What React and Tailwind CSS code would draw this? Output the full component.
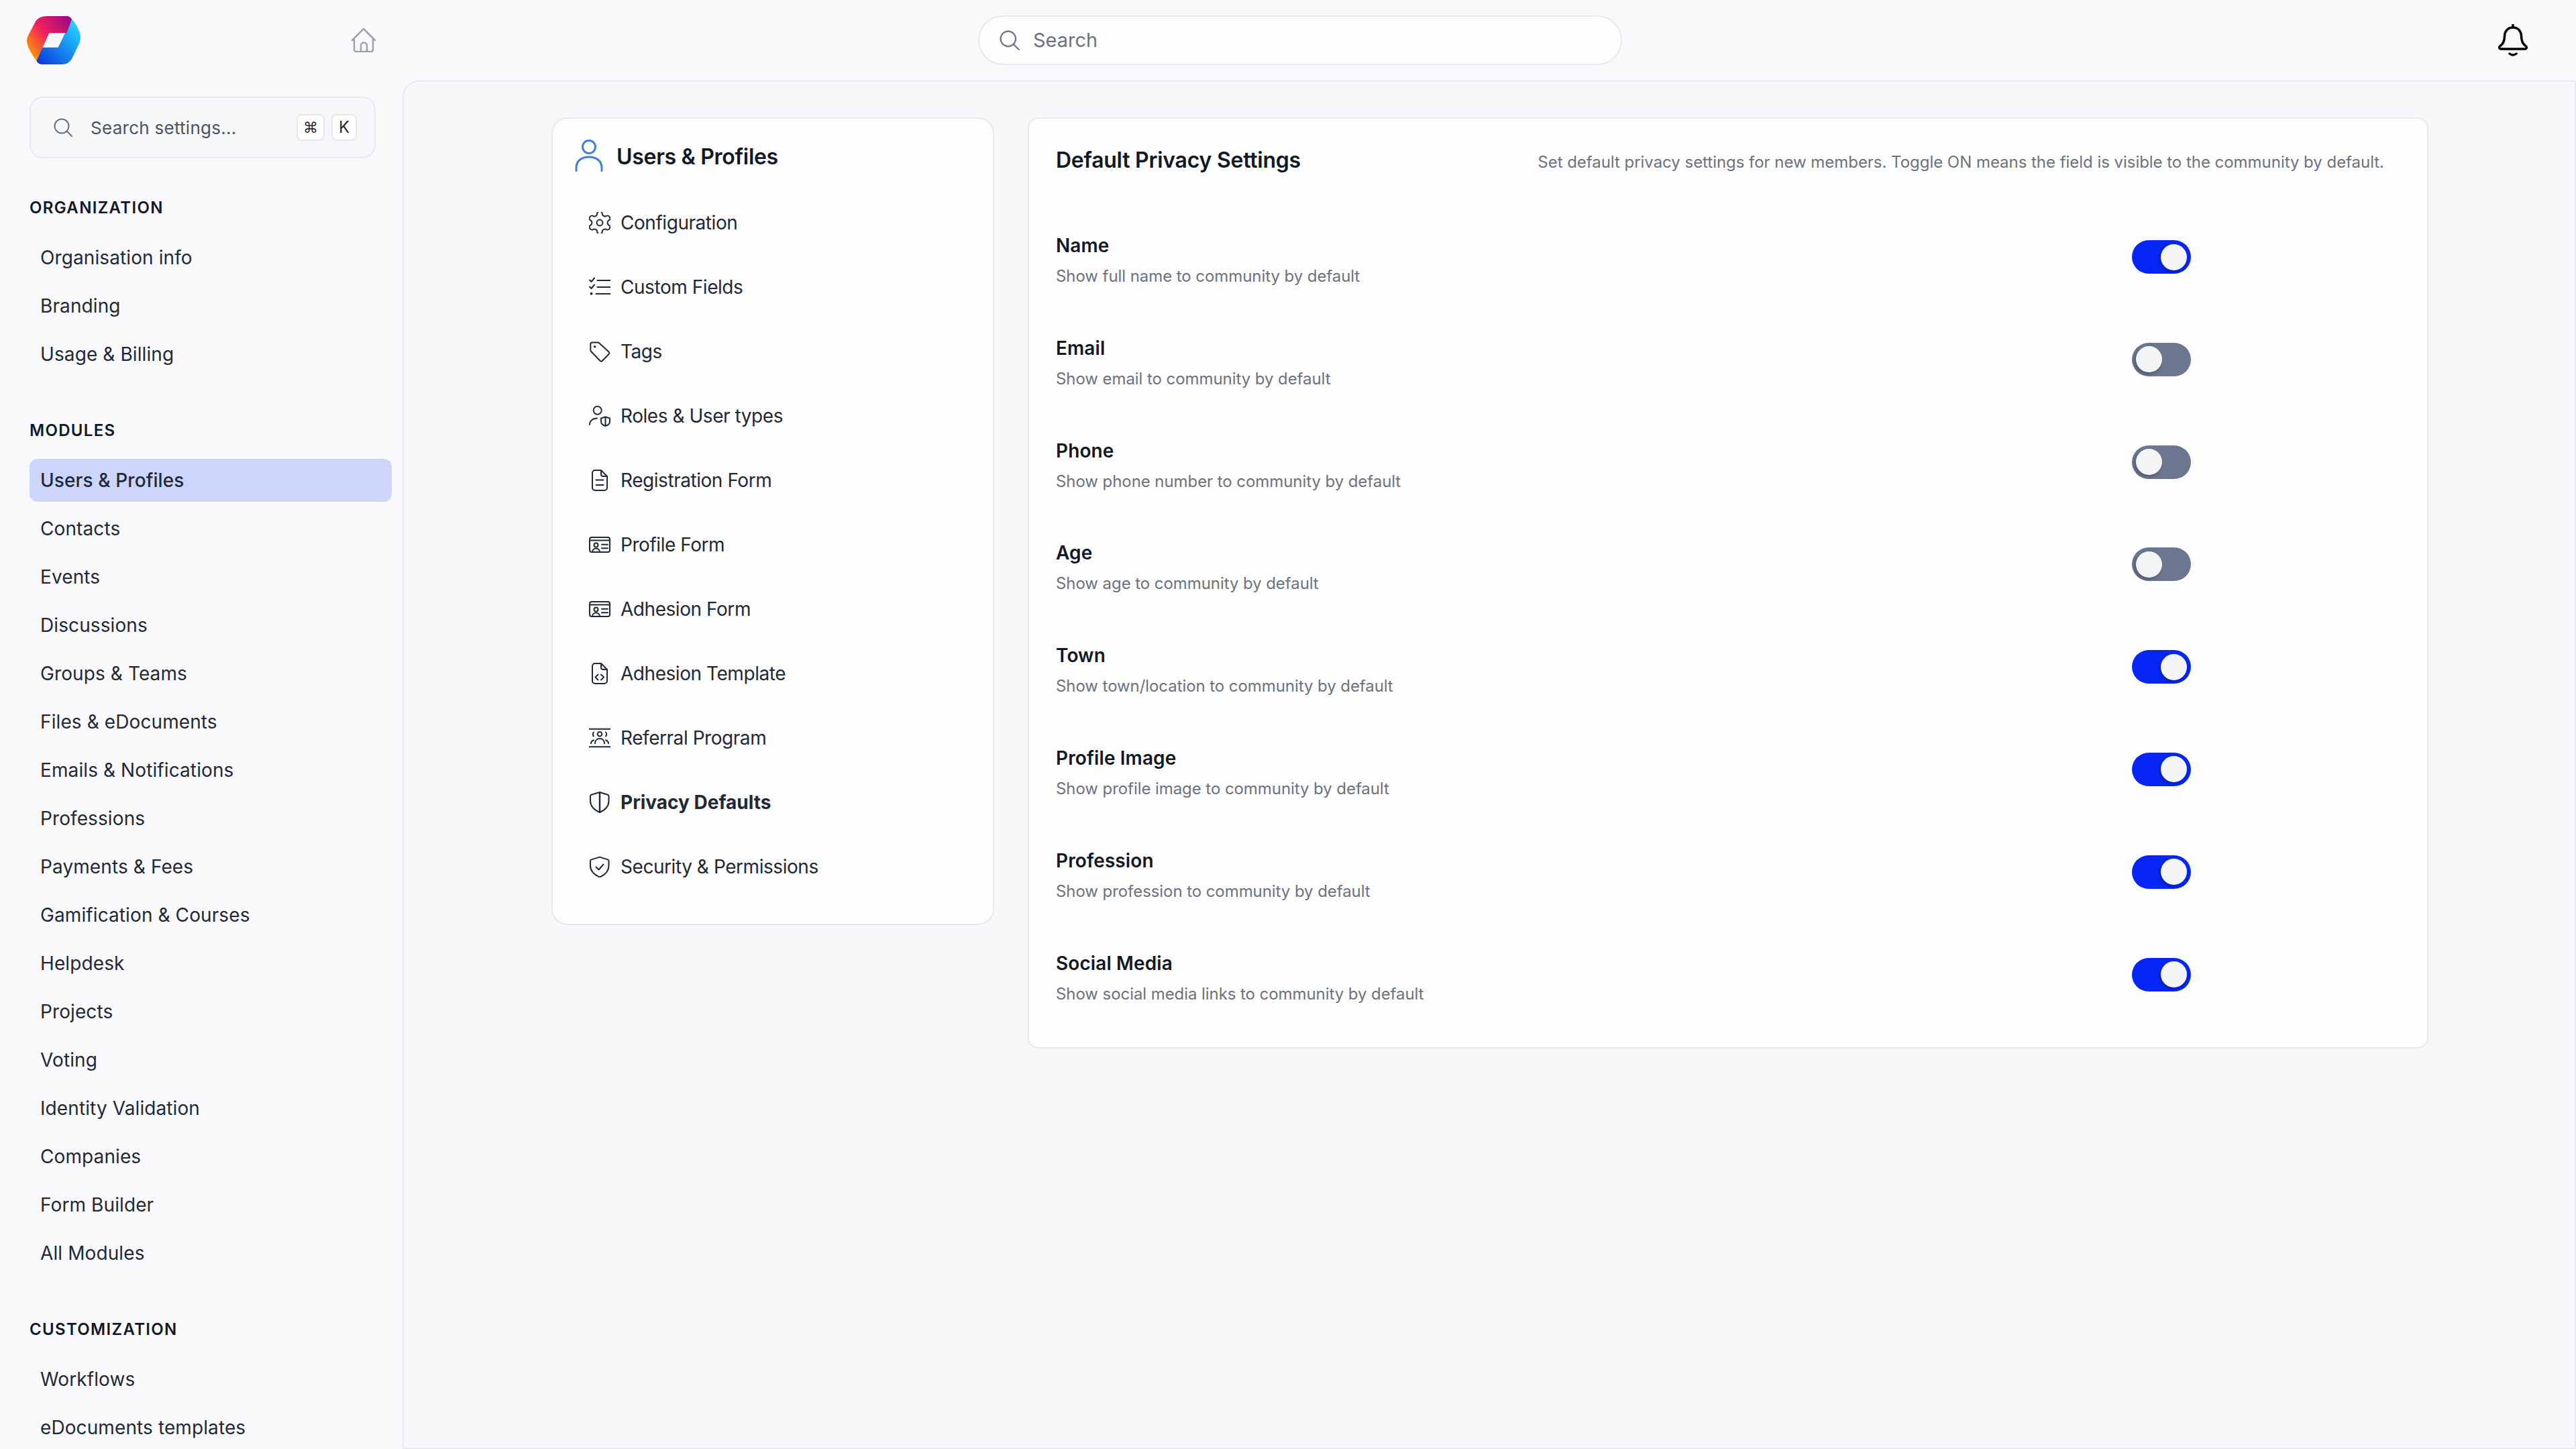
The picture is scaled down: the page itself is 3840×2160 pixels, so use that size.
import React from "react";

const Svg = ({ children, className = "w-8 h-8 shrink-0", vb = "0 0 32 32", sw = 2 }) => (
  <svg viewBox={vb} fill="none" stroke="currentColor" strokeWidth={sw} strokeLinecap="round" strokeLinejoin="round" className={className}>
    {children}
  </svg>
);

const Gear = () => (
  <Svg>
    <g transform="translate(-4.4 -4.4) scale(1.7)" strokeWidth="1.18">
      <path d="M12.22 2h-.44a2 2 0 0 0-2 2v.18a2 2 0 0 1-1 1.73l-.43.25a2 2 0 0 1-2 0l-.15-.08a2 2 0 0 0-2.73.73l-.22.38a2 2 0 0 0 .73 2.73l.15.1a2 2 0 0 1 1 1.72v.51a2 2 0 0 1-1 1.74l-.15.09a2 2 0 0 0-.73 2.73l.22.38a2 2 0 0 0 2.73.73l.15-.08a2 2 0 0 1 2 0l.43.25a2 2 0 0 1 1 1.73V20a2 2 0 0 0 2 2h.44a2 2 0 0 0 2-2v-.18a2 2 0 0 1 1-1.73l.43-.25a2 2 0 0 1 2 0l.15.08a2 2 0 0 0 2.73-.73l.22-.39a2 2 0 0 0-.73-2.73l-.15-.08a2 2 0 0 1-1-1.74v-.5a2 2 0 0 1 1-1.74l.15-.09a2 2 0 0 0 .73-2.73l-.22-.38a2 2 0 0 0-2.73-.73l-.15.08a2 2 0 0 1-2 0l-.43-.25a2 2 0 0 1-1-1.73V4a2 2 0 0 0-2-2z" />
      <circle cx="12" cy="12" r="2.6" />
    </g>
  </Svg>
);
const ListCheck = () => (
  <Svg>
    <path d="M12.5 6H32M12.5 16H32M10.5 26H32M1 5.5 3.5 8 8 2.5M1 15.5 3.5 18 8 12.5" />
    <circle cx="3.5" cy="25.7" r="1" />
  </Svg>
);
const Tag = () => (
  <Svg>
    <path d="M4.8 2.5h8.4a3 3 0 0 1 2.1.9l14.2 13.1a2.5 2.5 0 0 1 0 3.5L20 29.8a2.5 2.5 0 0 1-3.5 0L3.2 16a3 3 0 0 1-.9-2V5a2.5 2.5 0 0 1 2.5-2.5z" />
    <circle cx="8.7" cy="8.7" r="0.8" />
  </Svg>
);
const UserShield = () => (
  <Svg>
    <circle cx="12.7" cy="7.7" r="6" />
    <path d="M1 29c0-5 4-9.5 11-9.5M24.5 17.5l6.5 2v5c0 3.5-3 5.5-6.5 6.5-3.5-1-6.5-3-6.5-6.5v-5zM24.5 17.5V31" />
  </Svg>
);
const DocBody = "M9 1h9l9 9v17a4 4 0 0 1-4 4H9a4 4 0 0 1-4-4V5a4 4 0 0 1 4-4zM18 1v6a3 3 0 0 0 3 3h6";
const Doc = () => (
  <Svg>
    <path d={DocBody} />
    <path d="M10.5 15.5h11M10.5 23h11" />
  </Svg>
);
const DocCode = () => (
  <Svg>
    <path d={DocBody} />
    <path d="M13.5 17.5l-4 4 4 4M18 17.5l4 4-4 4" />
  </Svg>
);
const IdCard = () => (
  <Svg>
    <rect x="1" y="5" width="30" height="22" rx="3" />
    <path d="M1 9.5h30M19 15.7h9M19 21.3h9M5 27c0-3.5 2.5-5.5 5.5-5.5s5.5 2 5.5 5.5" />
    <circle cx="10.5" cy="16.5" r="3" />
  </Svg>
);
const Referral = () => (
  <Svg>
    <path d="M0.5 2.7h31M0.5 29.3h31" />
    <circle cx="16" cy="10.3" r="3.3" />
    <path d="M9 24.3c0-4.5 3-7.3 7-7.3s7 2.8 7 7.3M7 7.5c-1.5 1-1.5 5 0 6M25 7.5c1.5 1 1.5 5 0 6M3 24.3c0-2 1.500-4 4-5M29 24.3c0-2-1.500-4-4-5" />
  </Svg>
);
const ShieldPath = "M16 1l12 3.8a2 2 0 0 1 1.500 1.900V14c0 8-5.500 13.500-13.500 17C8 27.500 2 22 2 14V6.700a2 2 0 0 1 1.500-1.900z";
const ShieldHalf = () => (
  <Svg>
    <path d={ShieldPath} />
    <path d="M16 1v30" strokeWidth="2.4" />
  </Svg>
);
const ShieldCheck = () => (
  <Svg>
    <path d={ShieldPath} transform="translate(0 0.6)" />
    <path d="M10.500 16.500l4 4 7-8" />
  </Svg>
);

const Magnifier = ({ className }) => (
  <Svg vb="0 0 28 28" className={className}>
    <circle cx="12" cy="12" r="10.5" />
    <path d="M19.500 19.500 27 27" />
  </Svg>
);

const Logo = () => (
  <svg viewBox="0 0 80 72" className="w-20 h-[72px] shrink-0">
    <defs>
      <linearGradient id="red" x1="0.05" y1="0.85" x2="1" y2="0.1">
        <stop offset="0" stopColor="#ff9a00" />
        <stop offset="0.45" stopColor="#f2215c" />
        <stop offset="1" stopColor="#9c0a82" />
      </linearGradient>
      <linearGradient id="blue" x1="0.1" y1="1" x2="0.9" y2="0.2">
        <stop offset="0" stopColor="#0a3bdc" />
        <stop offset="1" stopColor="#24ccff" />
      </linearGradient>
    </defs>
    <path fill="url(#blue)" d="M67 4.500C72 10 80 22 80 32c0 4-1 7-3 11l-9 19c-3 6-8 10-16 10H24c-5 0-8.500-2-9.500-5.500l6.200-19.800h26z" />
    <path fill="url(#red)" d="M30 0h29c4 0 6.500 2 8 4.500l-7.500 20.800H33.300L14.500 66.500C10 61 0 46 0 37c0-4 1-6 3-10l10-19c3-5 9-8 17-8z" />
  </svg>
);

const Home = () => (
  <Svg vb="0 0 36 36" sw={2.5} className="w-9 h-9 shrink-0 text-[#9ca3af]">
    <path d="M1 18 18 1l17 17M4 15v17a3 3 0 0 0 3 3h22a3 3 0 0 0 3-3V15M14 35v-9a4.500 4.500 0 0 1 9 0v9" />
  </Svg>
);

const Bell = () => (
  <Svg vb="0 0 44 48" sw={3.5} className="w-11 h-12 shrink-0 text-black">
    <path d="M22 1v4M22 5c-8 0-12.500 6-12.500 13 0 8-2.500 12-7 15-1.500 1-1 4 1.500 4h36c2.500 0 3-3 1.500-4-4.500-3-7-7-7-15 0-7-4.500-13-12.500-13zM17 44q5 4 10 0" />
  </Svg>
);

const Section = ({ title, items, active, className = "mt-[66px]" }) => (
  <div className={className}>
    <div className="h-8 leading-8 text-[24px] font-semibold tracking-[0.055em] text-[#111827]">{title}</div>
    <div className="mt-[26px] flex flex-col gap-2">
      {items.map((t) => (
        <div
          key={t}
          className={`w-[540px] h-16 shrink-0 flex items-center pl-4 rounded-xl text-[28px] tracking-[0.1px] text-[#1f2937] ${t === active ? "bg-[#ccd6fd] font-medium" : ""}`}
        >
          {t}
        </div>
      ))}
    </div>
  </div>
);

const subNav = [
  ["Configuration", Gear],
  ["Custom Fields", ListCheck],
  ["Tags", Tag],
  ["Roles & User types", UserShield],
  ["Registration Form", Doc],
  ["Profile Form", IdCard],
  ["Adhesion Form", IdCard],
  ["Adhesion Template", DocCode],
  ["Referral Program", Referral],
  ["Privacy Defaults", ShieldHalf],
  ["Security & Permissions", ShieldCheck],
];

const fields = [
  ["Name", "Show full name to community by default", true],
  ["Email", "Show email to community by default", false],
  ["Phone", "Show phone number to community by default", false],
  ["Age", "Show age to community by default", false],
  ["Town", "Show town/location to community by default", true],
  ["Profile Image", "Show profile image to community by default", true],
  ["Profession", "Show profession to community by default", true],
  ["Social Media", "Show social media links to community by default", true],
];

const Toggle = ({ on }) => (
  <div className={`w-[88px] h-[50px] mt-3 shrink-0 rounded-full flex items-center px-[6px] ${on ? "justify-end bg-[#0526f5]" : "justify-start bg-[#6b7690]"}`}>
    <div className="w-[39px] h-[39px] rounded-full bg-[#f3f4f6] shadow-[-2px_3px_5px_rgba(0,0,0,0.25)]" />
  </div>
);

export default function App() {
  return (
    <div className="w-[3840px] h-[2160px] overflow-hidden flex flex-col bg-[#f9f9fb] font-['Inter',sans-serif]">
      <header className="h-[120px] shrink-0 flex items-center pl-10 pr-[72px]">
        <Logo />
        <div className="ml-[404px]">
          <Home />
        </div>
        <div className="ml-[898px] w-[960px] h-[74px] rounded-[37px] border-2 border-[#e8e9ed] bg-[#fdfdfd] flex items-center pl-[30px] gap-[20px]">
          <Magnifier className="w-[30px] h-[30px] shrink-0 text-[#6b7280]" />
          <span className="text-[29px] text-[#6b7280]">Search</span>
        </div>
        <div className="ml-auto">
          <Bell />
        </div>
      </header>
      <div className="flex-1 min-h-0 flex">
        <aside className="w-[600px] shrink-0 overflow-hidden pl-[44px] pt-6">
          <div className="w-[516px] h-[92px] rounded-[20px] border-2 border-[#e8e9ed] bg-[#f6f7f9] flex items-center pl-[34px] pr-[26px]">
            <Magnifier className="w-7 h-7 shrink-0 text-[#6b7280]" />
            <span className="ml-[27px] text-[26px] tracking-[0.27px] text-[#4b5563]">Search settings...</span>
            <span className="ml-auto w-[42px] h-10 rounded-lg border-2 border-[#e5e7eb] bg-white flex items-center justify-center text-[22px] text-[#1f2937] font-['DejaVu_Sans',sans-serif]">⌘</span>
            <span className="ml-[10px] w-[38px] h-10 rounded-lg border-2 border-[#e5e7eb] bg-white flex items-center justify-center text-[24px] text-[#1f2937]">K</span>
          </div>
          <Section className="mt-[58px]" title="ORGANIZATION" items={["Organisation info", "Branding", "Usage & Billing"]} />
          <Section
            title="MODULES"
            active="Users & Profiles"
            items={[
              "Users & Profiles",
              "Contacts",
              "Events",
              "Discussions",
              "Groups & Teams",
              "Files & eDocuments",
              "Emails & Notifications",
              "Professions",
              "Payments & Fees",
              "Gamification & Courses",
              "Helpdesk",
              "Projects",
              "Voting",
              "Identity Validation",
              "Companies",
              "Form Builder",
              "All Modules",
            ]}
          />
          <Section title="CUSTOMIZATION" items={["Workflows", "eDocuments templates"]} />
        </aside>
        <main className="flex-1 min-w-0 border-2 border-[#e8e9ed] rounded-tl-3xl bg-[#f6f7f9] pt-[53px] pl-[220px] flex items-start">
          <section className="w-[660px] h-[1204px] shrink-0 rounded-3xl border-2 border-[#e8e9ed] bg-[#fdfdfd] pl-[33px] pt-[31px]">
            <div className="flex items-center gap-5 h-12">
              <Svg vb="0 0 42 48" sw={3} className="w-[42px] h-12 shrink-0 text-[#3f7fdc]">
                <circle cx="21" cy="11" r="9.500" />
                <path d="M2 46.500V42c0-10 8-16 19-16s19 6 19 16v4.500" />
              </Svg>
              <h2 className="pt-1 text-[32px] font-semibold tracking-[-0.3px] text-[#111827]">Users &amp; Profiles</h2>
            </div>
            <nav className="mt-[28px] pl-[21px]">
              {subNav.map(([label, Icon]) => (
                <div key={label} className="h-24 flex items-center gap-[15px] text-[#1f2937]">
                  <Icon />
                  <span className={`text-[28px] ${label === "Privacy Defaults" ? "font-bold" : "tracking-[-0.45px]"}`}>{label}</span>
                </div>
              ))}
            </nav>
          </section>
          <section className="ml-[50px] w-[2088px] h-[1388px] shrink-0 rounded-2xl border-2 border-[#e8e9ed] bg-[#fdfdfd] pl-10 pr-[64px] pt-[38px]">
            <div className="flex items-baseline justify-between">
              <h2 className="text-[32px] leading-[48px] font-semibold tracking-[-0.25px] text-[#111827]">Default Privacy Settings</h2>
              <p className="text-[24px] tracking-[-0.035px] text-[#6b7280]">Set default privacy settings for new members. Toggle ON means the field is visible to the community by default.</p>
            </div>
            <div className="mt-[83px] w-[1692px] flex flex-col gap-[70.8px]">
              {fields.map(([name, desc, on]) => (
                <div key={name} className="flex items-start justify-between">
                  <div>
                    <div className="text-[28px] leading-10 font-semibold tracking-[0.1px] text-[#111827]">{name}</div>
                    <div className="mt-[10px] text-[24px] leading-8 tracking-[-0.07px] text-[#6b7280]">{desc}</div>
                  </div>
                  <Toggle on={on} />
                </div>
              ))}
            </div>
          </section>
        </main>
      </div>
    </div>
  );
}
